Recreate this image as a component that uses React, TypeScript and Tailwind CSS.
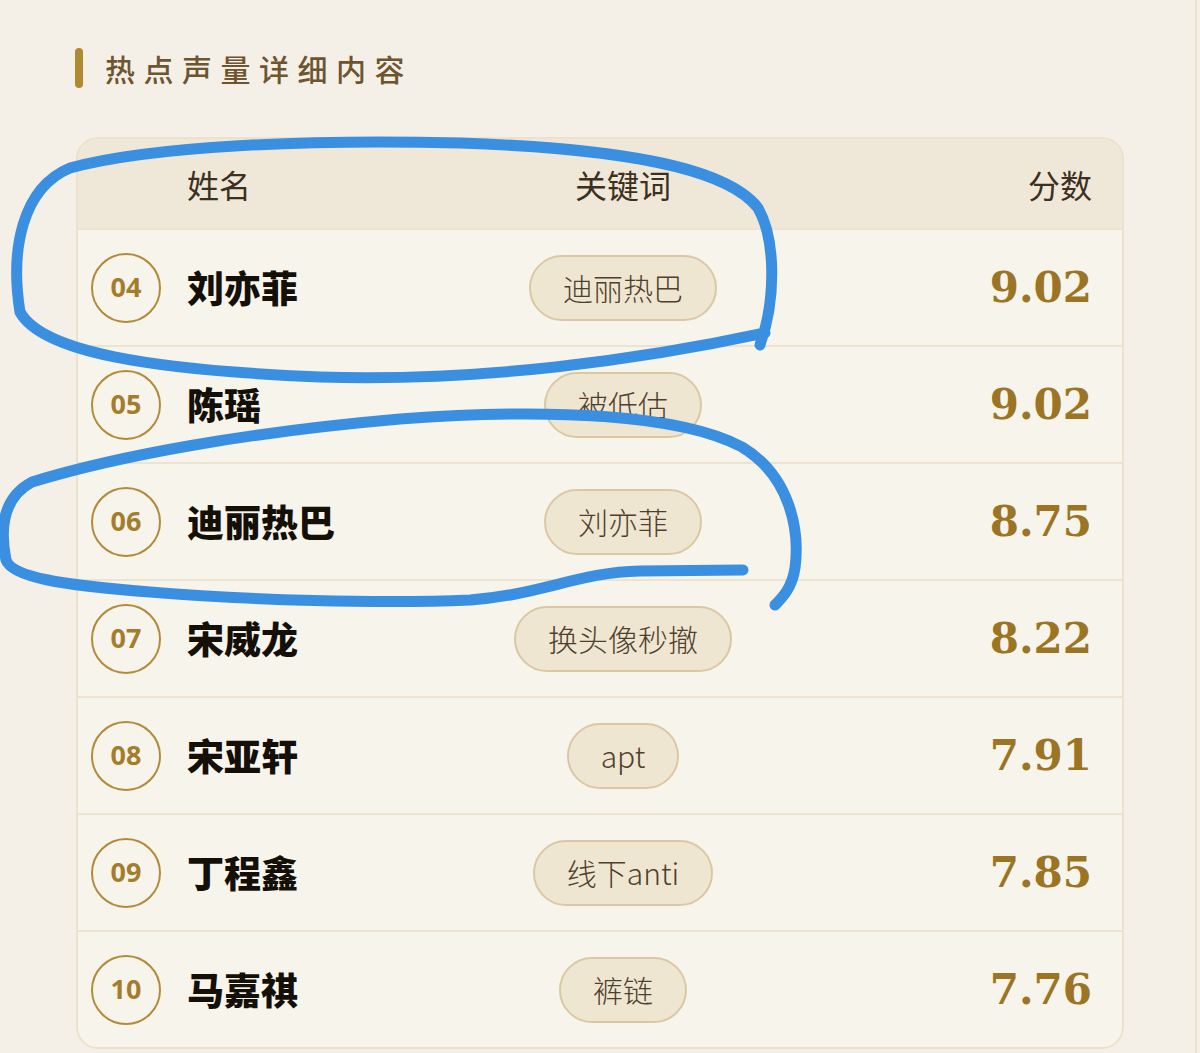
import { FC } from 'react';

type Row = { rank: string; name: string; keyword: string; score: string };

const rows: Row[] = [
  { rank: '04', name: '刘亦菲', keyword: '迪丽热巴', score: '9.02' },
  { rank: '05', name: '陈瑶', keyword: '被低估', score: '9.02' },
  { rank: '06', name: '迪丽热巴', keyword: '刘亦菲', score: '8.75' },
  { rank: '07', name: '宋威龙', keyword: '换头像秒撤', score: '8.22' },
  { rank: '08', name: '宋亚轩', keyword: 'apt', score: '7.91' },
  { rank: '09', name: '丁程鑫', keyword: '线下anti', score: '7.85' },
  { rank: '10', name: '马嘉祺', keyword: '裤链', score: '7.76' },
];

const App: FC = () => {
  return (
    <div className="relative w-[1200px] h-[1053px] overflow-hidden bg-[#f4f0e7] font-['Noto_Sans','Noto_Sans_CJK_SC',sans-serif]">
      <div className="w-[1197px] h-full border-r-2 border-[#ebe1cc] pt-[48px]">
        {/* title */}
        <div className="flex items-center ml-[75px] h-[40px]">
          <span className="w-[8px] h-[40px] rounded-full bg-[#b08a30]" />
          <h2 className="ml-[22px] text-[30px] leading-none font-medium tracking-[8.5px] text-[#6e5530] font-['Noto_Sans_CJK_SC',sans-serif]">
            热点声量详细内容
          </h2>
        </div>

        {/* table */}
        <div className="mt-[49px] ml-[76px] w-[1048px] rounded-[22px] border-2 border-[#ece1cb] bg-[#f7f4ec] overflow-hidden font-['Noto_Sans_CJK_SC',sans-serif]">
          <div className="grid grid-cols-[372px_346px_1fr] items-center h-[89px] bg-[#efe8d9] pr-[30px] text-[32px] text-[#3d3020]">
            <span className="pl-[109px]">姓名</span>
            <span className="text-center">关键词</span>
            <span className="text-right">分数</span>
          </div>

          {rows.map((row) => (
            <div
              key={row.rank}
              className="grid grid-cols-[372px_346px_1fr] items-center h-[117px] border-t-2 border-[#ece3d1] pr-[30px]"
            >
              <div className="flex items-center pl-[13px]">
                <span className="w-[70px] h-[70px] rounded-full border-[2.5px] border-[#b38a3b] flex items-center justify-center text-[27px] font-bold text-[#a47d2b] font-['Noto_Sans',sans-serif]">
                  {row.rank}
                </span>
                <span className="ml-[26px] text-[37px] font-black text-[#141008]">{row.name}</span>
              </div>
              <div className="flex justify-center">
                <span className="h-[66px] px-[32px] flex items-center rounded-full bg-[#efe6d2] border-2 border-[#dbc8a2] text-[30px] text-[#4f3f2c] font-light">
                  {row.keyword}
                </span>
              </div>
              <span className="text-right text-[42px] font-bold text-[#9b7424] font-['DejaVu_Serif',serif]">
                {row.score}
              </span>
            </div>
          ))}
        </div>
      </div>

      {/* hand-drawn annotation marks */}
      <svg
        className="absolute inset-0 pointer-events-none"
        width="1200"
        height="1053"
        viewBox="0 0 1200 1053"
        fill="none"
        stroke="#3b8fe0"
        strokeWidth="11"
        strokeLinecap="round"
        strokeLinejoin="round"
      >
        <path d="M 760 345 C 776 300, 776 240, 758 208 C 725 165, 610 148, 460 143 C 310 139, 150 146, 70 168 C 22 188, 10 250, 20 312 C 42 352, 150 370, 320 377 C 480 382, 640 360, 765 333" />
        <path d="M 743 570 L 640 571 C 580 572, 540 595, 470 600 C 380 604, 250 600, 150 592 C 60 585, 12 577, 6 560 C 0 530, 2 498, 32 482 C 120 455, 250 432, 400 419 C 550 408, 680 414, 742 447 C 790 476, 800 530, 795 568 C 792 588, 782 598, 775 605" />
      </svg>
    </div>
  );
};

export default App;
